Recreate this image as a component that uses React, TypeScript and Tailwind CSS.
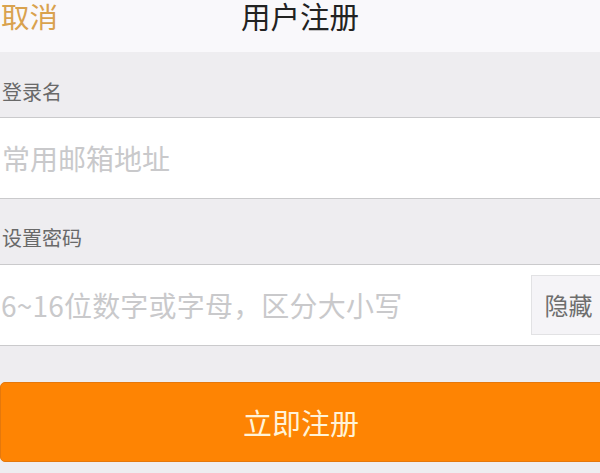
import React from "react";

export default function App() {
  const font = { fontFamily: '"Noto Sans CJK SC", "Noto Sans", sans-serif' };
  return (
    <div
      className="w-[600px] h-[473px] overflow-hidden bg-[#eeedf0] flex flex-col"
      style={font}
    >
      {/* header */}
      <div className="h-[52px] shrink-0 bg-[#f9f8fb] grid grid-cols-[1fr_auto_1fr] items-start">
        <button className="justify-self-start pl-[1px] pt-[1px] text-[28.5px] leading-[30px] text-[#d9a24e]">
          取消
        </button>
        <h1 className="pt-[1px] text-[29.5px] leading-[28px] text-[#222222] font-normal">
          用户注册
        </h1>
        <div />
      </div>

      {/* login name label */}
      <div className="h-[65px] shrink-0 pl-[2px] pt-[28px] text-[20px] leading-[24px] text-[#696969]">
        登录名
      </div>
      <div className="h-[82px] shrink-0 bg-white border-y border-[#cacacc] flex items-center">
        <input
          className="w-full h-full pl-[2px] bg-transparent outline-none text-[28px] text-[#333] placeholder:text-[#c9c9cb]"
          placeholder="常用邮箱地址"
          style={font}
        />
      </div>

      {/* password label */}
      <div className="h-[65px] shrink-0 pl-[2px] pt-[27px] text-[20px] leading-[24px] text-[#696969]">
        设置密码
      </div>
      <div className="h-[82px] shrink-0 bg-white border-y border-[#cacacc] flex items-center">
        <input
          className="flex-1 min-w-0 h-full pl-[1px] bg-transparent outline-none text-[28px] tracking-[0.2px] text-[#333] placeholder:text-[#c9c9cb]"
          placeholder="6~16位数字或字母，区分大小写"
          style={font}
        />
        <button className="shrink-0 w-[75px] h-[60px] -mr-[6px] bg-[#f5f4f7] border border-[#e2e2e4] text-[24px] leading-none text-[#6e6e6e] flex items-center justify-center">
          隐藏
        </button>
      </div>

      {/* submit */}
      <div className="pt-[36px] -mr-[6px]">
        <button className="w-full h-[80px] rounded-[5px] bg-[#fe8403] border border-[#e5780c] text-[29px] leading-none text-[#fff3d8] flex items-center justify-center pr-[4px]">
          立即注册
        </button>
      </div>
    </div>
  );
}
